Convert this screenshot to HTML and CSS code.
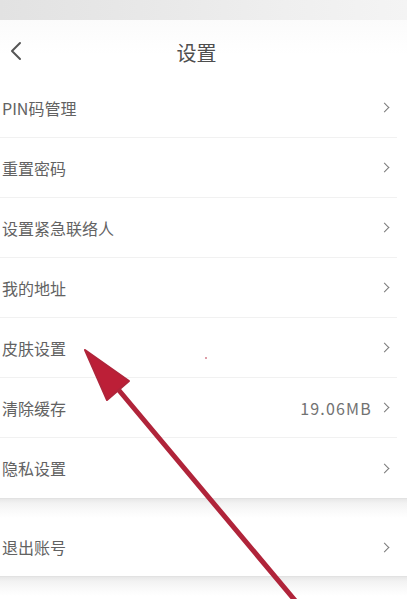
FILE: index.html
```html
<!DOCTYPE html>
<html lang="zh-CN">
<head>
<meta charset="utf-8">
<title>设置</title>
<link rel="stylesheet" href="styles.css">
</head>
<body>
<div class="page">
  <div class="status"></div>
  <header class="header">
    <span class="back">
      <svg width="12" height="20" viewBox="0 0 12 20"><path d="M10 2 L2 10 L10 18" fill="none" stroke="#555" stroke-width="2" stroke-linecap="round" stroke-linejoin="round"/></svg>
    </span>
    <h1 class="title">设置</h1>
    <span></span>
  </header>
  <ul class="group">
    <li class="row"><span class="label">PIN码管理</span><span class="chev"></span></li>
    <li class="row"><span class="label">重置密码</span><span class="chev"></span></li>
    <li class="row"><span class="label">设置紧急联络人</span><span class="chev"></span></li>
    <li class="row"><span class="label">我的地址</span><span class="chev"></span></li>
    <li class="row"><span class="label">皮肤设置</span><span class="chev"></span></li>
    <li class="row"><span class="label">清除缓存</span><span class="value">19.06MB</span><span class="chev"></span></li>
    <li class="row last"><span class="label">隐私设置</span><span class="chev"></span></li>
  </ul>
  <div class="band"></div>
  <ul class="group">
    <li class="row last"><span class="label">退出账号</span><span class="chev"></span></li>
  </ul>
  <div class="band"></div>
  <svg class="arrow" width="407" height="599" viewBox="0 0 407 599">
    <line x1="112" y1="382" x2="298" y2="604" stroke="#b0243a" stroke-width="5" stroke-linecap="round"/>
    <polygon points="85,350 129,381 107,400" fill="#bc1f37" stroke="#b0243a" stroke-width="2" stroke-linejoin="round"/>
    <circle cx="206" cy="358" r="0.8" fill="#b3223a"/>
  </svg>
</div>
</body>
</html>
```
FILE: styles.css
```css
* { box-sizing: border-box; }
html, body { margin: 0; padding: 0; background: #fff; }
body {
  font-family: "Noto Sans CJK SC", "Noto Sans", sans-serif;
  color: #5a5a5a;
}
.page {
  position: relative;
  width: 407px;
  height: 599px;
  overflow: hidden;
  background: #fff;
}
.status {
  height: 20px;
  background: linear-gradient(90deg, #e2e2e2 0%, #e9e9e9 40%, #efefef 70%, #f4f4f4 100%);
}
.header {
  height: 58px;
  display: grid;
  grid-template-columns: 60px 1fr 60px;
  align-items: center;
  background: linear-gradient(180deg, #fbfbfb 0%, #ffffff 60%);
}
.back {
  display: flex;
  align-items: center;
  padding-left: 10px;
  padding-top: 4px;
}
.title {
  margin: 0;
  text-align: center;
  font-size: 20px;
  font-weight: 400;
  color: #4e4e4e;
  padding-top: 6px;
  padding-right: 14px;
}
.group {
  list-style: none;
  margin: 0;
  padding: 0;
}
.row {
  width: 397px;
  height: 60px;
  display: flex;
  align-items: center;
  padding: 0 9px 0 2px;
  border-bottom: 1px solid #f1f1f1;
  font-size: 16px;
}
.row.last { border-bottom: none; }
.band + .group .row { height: 58px; }
.label { flex: 1; color: #626262; }
.value { color: #727272; margin-right: 9px; font-size: 16px; letter-spacing: 1.2px; }
.chev {
  width: 7px;
  height: 7px;
  border-top: 1.6px solid #7a7a7a;
  border-right: 1.6px solid #7a7a7a;
  transform: rotate(45deg);
}
.band {
  height: 20px;
  background: linear-gradient(180deg, #dcdcdc 0px, #e8e8e8 1px, #f2f2f2 5px, #f9f9f9 12px, #ffffff 20px);
}
.arrow {
  position: absolute;
  left: 0;
  top: 0;
  pointer-events: none;
}
```
